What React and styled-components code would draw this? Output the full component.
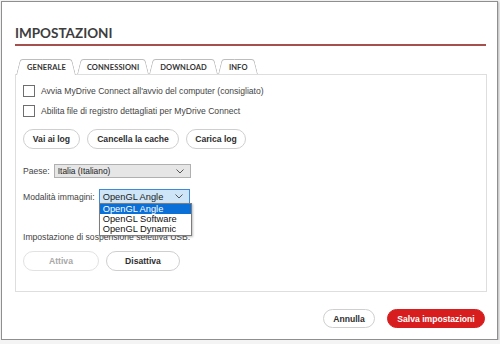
import styled, { createGlobalStyle } from "styled-components";

const Global = createGlobalStyle`
  html, body {
    margin: 0;
    padding: 0;
    background: #f4f4f4;
  }
  body {
    font-family: "Liberation Sans", Arial, sans-serif;
    color: #333;
  }
`;

const Finestra = styled.div`
  box-sizing: border-box;
  margin: 1px 0 0 1px;
  width: 497px;
  height: 339px;
  background: #fff;
  border: 1px solid #8f8f8f;
  box-shadow: 1px 1px 2px rgba(0, 0, 0, 0.25);
  padding: 0 11px 0 13px;
  display: flex;
  flex-direction: column;
`;

const Titolo = styled.h1`
  margin: 0;
  padding-top: 23px;
  height: 19px;
  font-family: Lato, "Open Sans", sans-serif;
  font-size: 13.5px;
  font-weight: 700;
  color: #3d3d3d;
  line-height: 16px;
  border-bottom: 2px solid #a4514d;
`;

const BarraSchede = styled.div`
  display: flex;
  margin-top: 13px;
  margin-bottom: -1px;
  padding-left: 1px;
`;

const Scheda = styled.div`
  position: relative;
  z-index: 1;
  height: 16px;
  line-height: 17px;
  padding: 0 ${(p) => p.$pad || 12}px;
  font-family: Lato, "Open Sans", sans-serif;
  font-size: 7.5px;
  font-weight: 700;
  color: #333;
  letter-spacing: 0.1px;

  &::before,
  &::after {
    content: "";
    position: absolute;
    top: 0;
    bottom: ${(p) => (p.$attiva ? "0" : "1px")};
    z-index: -1;
    background: #fff;
    border-top: 1px solid #bdbdbd;
  }
  &::before {
    left: 0;
    right: 50%;
    border-left: 1px solid #bdbdbd;
    border-top-left-radius: 3px;
    transform: skewX(-14deg);
    transform-origin: bottom left;
  }
  &::after {
    left: 50%;
    right: 0;
    border-right: 1px solid #bdbdbd;
    border-top-right-radius: 3px;
    transform: skewX(14deg);
    transform-origin: bottom right;
  }
`;

const Pannello = styled.div`
  position: relative;
  z-index: 0;
  box-sizing: border-box;
  width: 472px;
  height: 218px;
  border: 1px solid #dedede;
  padding: 10px 8px 0 7px;
  display: flex;
  flex-direction: column;
`;

const RigaSpunta = styled.label`
  display: flex;
  align-items: center;
  gap: 6px;
  height: 12px;
  margin-bottom: 8px;
  font-size: 8.6px;
  color: #444;
`;

const Casella = styled.span`
  box-sizing: border-box;
  width: 12px;
  height: 12px;
  border: 1px solid #6e6e6e;
  background: #fff;
`;

const RigaBottoni = styled.div`
  display: flex;
  gap: ${(p) => p.$gap || 7}px;
  margin-top: ${(p) => p.$top || 0}px;
`;

const Bottone = styled.button`
  box-sizing: border-box;
  height: ${(p) => p.$h || 20}px;
  width: ${(p) => p.$w}px;
  padding: 0;
  border-radius: 10px;
  border: 1px solid ${(p) => (p.$rosso ? "#d71d1d" : p.$spento ? "#e2e2e2" : "#cfcfcf")};
  background: ${(p) => (p.$rosso ? "#d71d1d" : "#fff")};
  color: ${(p) => (p.$rosso ? "#fff" : p.$spento ? "#a8a8a8" : "#2e2e2e")};
  font-family: "Liberation Sans", Arial, sans-serif;
  font-size: 8.6px;
  font-weight: 700;
  cursor: pointer;
`;

const RigaCampo = styled.div`
  display: flex;
  align-items: center;
  gap: 4px;
  margin-top: ${(p) => p.$top}px;
  font-size: 8.6px;
  color: #444;
`;

const Menu = styled.div`
  position: relative;
  box-sizing: border-box;
  width: ${(p) => p.$w}px;
  height: ${(p) => p.$h}px;
  border: 1px solid ${(p) => (p.$focus ? "#3c8ad8" : "#b0b0b0")};
  background: ${(p) => (p.$focus ? "#cde5f7" : "#e6e6e6")};
  display: flex;
  align-items: center;
  justify-content: space-between;
  padding: 0 6px 0 3px;
  font-size: ${(p) => (p.$focus ? "9.3px" : "8.4px")};
  color: #222;
`;

const Elenco = styled.div`
  position: absolute;
  left: -1px;
  top: calc(100% + 0px);
  box-sizing: border-box;
  width: 93px;
  border: 1px solid #7d7d7d;
  background: #fff;
  box-shadow: 1px 1px 2px rgba(0, 0, 0, 0.25);
  z-index: 5;
  padding: 0 0 1px;
`;

const Voce = styled.div`
  height: 10px;
  line-height: 10px;
  padding-left: 3px;
  font-size: 9.3px;
  background: ${(p) => (p.$sel ? "#0a6fd6" : "#fff")};
  color: ${(p) => (p.$sel ? "#fff" : "#111")};
`;

const Etichetta = styled.div`
  margin-top: 28px;
  font-size: 8.6px;
  color: #444;
  height: 10px;
  line-height: 10px;
`;

const Piede = styled.div`
  display: flex;
  justify-content: flex-end;
  gap: 12px;
  margin-top: 17px;
  padding-right: 1px;
`;

const Freccia = () => (
  <svg width="8" height="5" viewBox="0 0 8 5">
    <polyline points="0.5,0.5 4,4 7.5,0.5" fill="none" stroke="#444" strokeWidth="0.9" />
  </svg>
);

const App = () => {
  return (
    <>
      <Global />
      <Finestra>
        <Titolo>IMPOSTAZIONI</Titolo>
        <BarraSchede>
          <Scheda $attiva $pad={11}>GENERALE</Scheda>
          <Scheda $pad={10}>CONNESSIONI</Scheda>
          <Scheda $pad={11}>DOWNLOAD</Scheda>
          <Scheda $pad={11}>INFO</Scheda>
        </BarraSchede>
        <Pannello>
          <RigaSpunta>
            <Casella />
            Avvia MyDrive Connect all'avvio del computer (consigliato)
          </RigaSpunta>
          <RigaSpunta>
            <Casella />
            Abilita file di registro dettagliati per MyDrive Connect
          </RigaSpunta>
          <RigaBottoni $top={4}>
            <Bottone $w={57}>Vai ai log</Bottone>
            <Bottone $w={92}>Cancella la cache</Bottone>
            <Bottone $w={60}>Carica log</Bottone>
          </RigaBottoni>
          <RigaCampo $top={15}>
            Paese:
            <Menu $w={137} $h={14}>
              Italia (Italiano)
              <Freccia />
            </Menu>
          </RigaCampo>
          <RigaCampo $top={11}>
            Modalità immagini:
            <Menu $focus $w={91} $h={15}>
              OpenGL Angle
              <Freccia />
              <Elenco>
                <Voce $sel>OpenGL Angle</Voce>
                <Voce>OpenGL Software</Voce>
                <Voce>OpenGL Dynamic</Voce>
              </Elenco>
            </Menu>
          </RigaCampo>
          <Etichetta>Impostazione di sospensione selettiva USB:</Etichetta>
          <RigaBottoni $top={9}>
            <Bottone $w={76} $spento>Attiva</Bottone>
            <Bottone $w={74}>Disattiva</Bottone>
          </RigaBottoni>
        </Pannello>
        <Piede>
          <Bottone $w={52} $h={19}>Annulla</Bottone>
          <Bottone $w={98} $h={19} $rosso>Salva impostazioni</Bottone>
        </Piede>
      </Finestra>
    </>
  );
};

export default App;
